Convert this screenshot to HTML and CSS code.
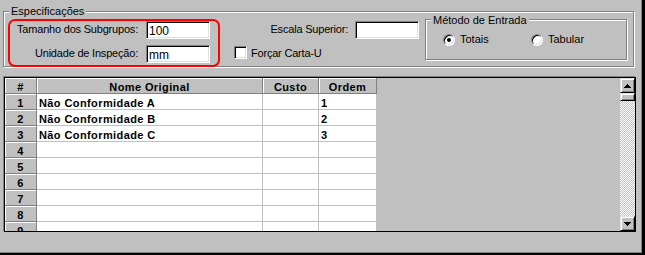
FILE: index.html
```html
<!DOCTYPE html>
<html lang="pt">
<head>
<meta charset="utf-8">
<title>Especificações</title>
<link rel="stylesheet" href="styles.css">
</head>
<body>
<div class="window">
  <div class="group spec">
    <span class="group-title">Especificações</span>
    <div class="spec-body">
      <div class="fields">
        <span class="field-label">Tamanho dos Subgrupos:</span>
        <input class="field" type="text" value="100">
        <span class="field-label">Unidade de Inspeção:</span>
        <input class="field" type="text" value="mm">
      </div>
      <div class="options">
        <div class="opt-row opt-right">
          <span class="field-label">Escala Superior:</span>
          <input class="field" type="text" value="">
        </div>
        <div class="opt-row">
          <span class="checkbox"></span>
          <span class="field-label">Forçar Carta-U</span>
        </div>
      </div>
      <div class="group method">
        <span class="group-title">Método de Entrada</span>
        <div class="radios">
          <div class="radio-item radio-first"><span class="radio checked"></span><span>Totais</span></div>
          <div class="radio-item"><span class="radio"></span><span>Tabular</span></div>
        </div>
      </div>
    </div>
  </div>

  <div class="grid">
    <div class="grid-cells">
      <div class="cell fixed">#</div>
      <div class="cell fixed">Nome Original</div>
      <div class="cell fixed">Custo</div>
      <div class="cell fixed">Ordem</div>

      <div class="cell fixed">1</div>
      <div class="cell">Não Conformidade A</div>
      <div class="cell"></div>
      <div class="cell">1</div>

      <div class="cell fixed">2</div>
      <div class="cell">Não Conformidade B</div>
      <div class="cell"></div>
      <div class="cell">2</div>

      <div class="cell fixed">3</div>
      <div class="cell">Não Conformidade C</div>
      <div class="cell"></div>
      <div class="cell">3</div>

      <div class="cell fixed">4</div>
      <div class="cell"></div>
      <div class="cell"></div>
      <div class="cell"></div>

      <div class="cell fixed">5</div>
      <div class="cell"></div>
      <div class="cell"></div>
      <div class="cell"></div>

      <div class="cell fixed">6</div>
      <div class="cell"></div>
      <div class="cell"></div>
      <div class="cell"></div>

      <div class="cell fixed">7</div>
      <div class="cell"></div>
      <div class="cell"></div>
      <div class="cell"></div>

      <div class="cell fixed">8</div>
      <div class="cell"></div>
      <div class="cell"></div>
      <div class="cell"></div>

      <div class="cell fixed">9</div>
      <div class="cell"></div>
      <div class="cell"></div>
      <div class="cell"></div>
    </div>
    <div class="grid-fill"></div>
    <div class="scrollbar">
      <div class="sb-btn">
        <svg width="7" height="4" viewBox="0 0 7 4"><rect x="3" y="0" width="1" height="1"/><rect x="2" y="1" width="3" height="1"/><rect x="1" y="2" width="5" height="1"/><rect x="0" y="3" width="7" height="1"/></svg>
      </div>
      <div class="sb-thumb"></div>
      <div class="sb-track"></div>
      <div class="sb-btn">
        <svg width="7" height="4" viewBox="0 0 7 4"><rect x="0" y="0" width="7" height="1"/><rect x="1" y="1" width="5" height="1"/><rect x="2" y="2" width="3" height="1"/><rect x="3" y="3" width="1" height="1"/></svg>
      </div>
    </div>
  </div>

  <div class="highlight"></div>
</div>
</body>
</html>
```

FILE: styles.css
```css
html, body {
  margin: 0;
  padding: 0;
  background: #c0c0c0;
}

.window {
  position: relative;
  width: 645px;
  height: 255px;
  box-sizing: border-box;
  background: #c0c0c0;
  display: flex;
  flex-direction: column;
  align-items: flex-start;
  font-family: "Liberation Sans", Arial, sans-serif;
  font-size: 11px;
  color: #000;
  box-shadow: inset -3px -2px 0 #000, inset -4px -3px 0 #808080;
  overflow: hidden;
}

/* etched group boxes */
.group {
  position: relative;
  box-sizing: border-box;
  border: 1px solid #808080;
  box-shadow: inset 1px 1px 0 #fff, 1px 1px 0 #fff;
}

.group-title {
  position: absolute;
  top: -7px;
  left: 5px;
  padding: 0 2px;
  line-height: 13px;
  background: #c0c0c0;
  white-space: nowrap;
}

.spec {
  margin: 11px 0 0 3px;
  width: 631px;
  height: 56px;
}

.spec-body {
  display: flex;
  align-items: flex-start;
  padding-top: 9px;
}

.fields {
  display: grid;
  grid-template-columns: 134px 64px;
  grid-auto-rows: 18px;
  column-gap: 8px;
  row-gap: 6px;
}

.field-label {
  padding-top: 1px;
  line-height: 14px;
  white-space: nowrap;
  letter-spacing: -0.2px;
}

.fields .field-label {
  text-align: right;
}

.field {
  box-sizing: border-box;
  width: 64px;
  height: 18px;
  margin: 0;
  padding: 1px 2px 0;
  border: 1px solid;
  border-color: #808080 #fff #fff #808080;
  box-shadow: inset 1px 1px 0 #000, inset -1px -1px 0 #dfdfdf;
  background: #fff;
  font-family: "Liberation Sans", Arial, sans-serif;
  font-size: 12px;
  color: #000;
  outline: none;
}

.options {
  margin-left: 24px;
  width: 185px;
  display: grid;
  grid-auto-rows: 18px;
  row-gap: 6px;
}

.opt-row {
  display: flex;
  align-items: flex-start;
  gap: 4px;
}

.opt-right {
  justify-content: flex-end;
  gap: 7px;
}

.checkbox {
  box-sizing: border-box;
  width: 13px;
  height: 13px;
  margin-top: 1px;
  border: 1px solid;
  border-color: #808080 #fff #fff #808080;
  box-shadow: inset 1px 1px 0 #000, inset -1px -1px 0 #dfdfdf;
  background: #fff;
}

.method {
  margin: -2px 0 0 6px;
  width: 202px;
  height: 41px;
}

.method .group-title {
  top: -6px;
}

.radios {
  display: flex;
  padding: 13px 0 0 17px;
}

.radio-item {
  display: flex;
  align-items: center;
  gap: 5px;
  line-height: 13px;
}

.radio-first {
  width: 88px;
}

.radio {
  position: relative;
  box-sizing: border-box;
  width: 12px;
  height: 12px;
  border-radius: 50%;
  border: 1px solid;
  border-color: #808080 #fff #fff #808080;
  box-shadow: inset 1px 1px 0 #000, inset -1px -1px 0 #dfdfdf;
  background: #fff;
}

.radio.checked::after {
  content: "";
  position: absolute;
  left: 3px;
  top: 3px;
  width: 4px;
  height: 4px;
  border-radius: 50%;
  background: #000;
}

/* data grid */
.grid {
  margin: 10px 0 0 4px;
  box-sizing: border-box;
  width: 632px;
  height: 155px;
  border: 1px solid #000;
  box-shadow: -1px -1px 0 #808080;
  display: flex;
  overflow: hidden;
}

.grid-cells {
  width: 372px;
  height: 153px;
  overflow: hidden;
  display: grid;
  grid-template-columns: 32px 226px 56px 58px;
  grid-auto-rows: 16px;
  align-content: start;
}

.cell {
  box-sizing: border-box;
  border-right: 1px solid #c0c0c0;
  border-bottom: 1px solid #c0c0c0;
  background: #fff;
  padding: 3px 0 0 2px;
  line-height: 12px;
  font-weight: bold;
  letter-spacing: 0.4px;
  white-space: nowrap;
  overflow: hidden;
}

.cell.fixed {
  background: #c0c0c0;
  border-color: #808080;
  box-shadow: inset 1px 1px 0 #fff;
  text-align: center;
  padding-left: 0;
}

.grid-fill {
  flex: 1;
  background: #c0c0c0;
}

.scrollbar {
  width: 15px;
  display: flex;
  flex-direction: column;
  background-color: #fff;
  background-image: conic-gradient(#c0c0c0 25%, #fff 0 50%, #c0c0c0 0 75%, #fff 0);
  background-size: 2px 2px;
}

.sb-btn,
.sb-thumb {
  box-sizing: border-box;
  width: 15px;
  background: #c0c0c0;
  border: 1px solid;
  border-color: #dfdfdf #000 #000 #dfdfdf;
  box-shadow: inset 1px 1px 0 #fff, inset -1px -1px 0 #808080;
}

.sb-btn {
  height: 15px;
  display: flex;
  align-items: center;
  justify-content: center;
}

.sb-btn svg {
  display: block;
  fill: #000;
}

.sb-thumb {
  height: 8px;
}

.sb-track {
  flex: 1;
}

/* red annotation drawn over the form */
.highlight {
  position: absolute;
  left: 8px;
  top: 19px;
  width: 212px;
  height: 48px;
  box-sizing: border-box;
  border: 2px solid #ff0000;
  border-radius: 7px;
  pointer-events: none;
}
```
